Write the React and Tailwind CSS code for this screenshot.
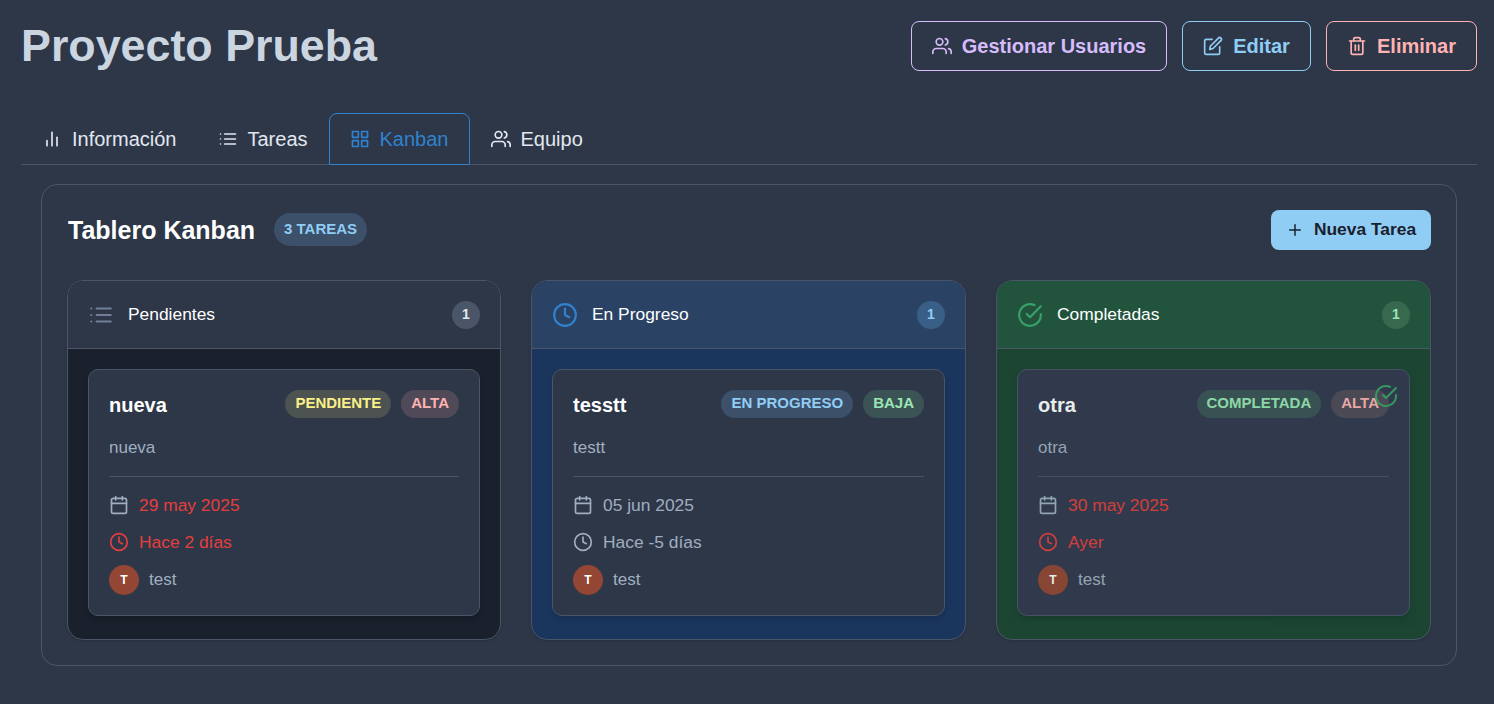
import React from 'react';
import { FiBarChart2, FiList, FiGrid, FiUsers, FiEdit, FiTrash2, FiPlus, FiClock, FiCalendar, FiCheckCircle } from 'react-icons/fi';

const TaskCard = ({ title, desc, statusLabel, statusClass, prioLabel, prioClass, date, ago, overdue, done }) => {
  const tone = overdue ? 'text-[#e53e3e]' : 'text-[#a0aec0]';
  return (
    <div className={`relative h-[247px] rounded-[10px] border border-[#4a5568] pl-5 pr-5 pt-5 shadow-md ${done ? 'opacity-90 bg-[#34394f]' : 'bg-[#2d3748]'}`}>
      {done && <FiCheckCircle className="absolute right-[11px] top-[14px] w-6 h-6 text-[#38a169]" />}
      <div className="flex items-center justify-between h-[28px]">
        <h3 className="text-[20px] font-bold text-white leading-[28px] pt-[2px]">{title}</h3>
        <div className="flex gap-[10px]">
          <span className={`h-[28px] px-[10px] rounded-full text-[15px] font-bold leading-[26px] ${statusClass}`}>{statusLabel}</span>
          <span className={`h-[28px] px-[10px] rounded-full text-[15px] font-bold leading-[26px] ${prioClass}`}>{prioLabel}</span>
        </div>
      </div>
      <p className="mt-[18px] text-[17px] leading-[24px] text-[#a0aec0]">{desc}</p>
      <div className="mt-[16px] border-t border-[#4a5568]" />
      <div className="mt-[16px] flex items-center gap-[10px] h-[24px]">
        <FiCalendar className="w-5 h-5 text-[#a0aec0] shrink-0" />
        <span className={`text-[17.4px] leading-[24px] ${tone}`}>{date}</span>
      </div>
      <div className="mt-[13px] flex items-center gap-[10px] h-[24px]">
        <FiClock className={`w-5 h-5 shrink-0 ${tone}`} />
        <span className={`text-[17.4px] leading-[24px] ${tone}`}>{ago}</span>
      </div>
      <div className="mt-[11px] flex items-center gap-[10px]">
        <div className="w-[30px] h-[30px] rounded-full bg-[#934634] flex items-center justify-center text-[12px] font-bold text-white">T</div>
        <span className="text-[17px] leading-[24px] text-[#a0aec0]">test</span>
      </div>
    </div>
  );
};

const Column = ({ icon, iconClass, name, headClass, bodyClass, countClass, children }) => (
  <div className={`rounded-2xl border border-[#4a5568] overflow-hidden shadow-sm ${bodyClass}`}>
    <div className={`h-[68px] flex items-center justify-between pl-5 pr-5 border-b border-[#4a5568] ${headClass}`}>
      <div className="flex items-center gap-[14px]">
        <span className={iconClass}>{icon}</span>
        <span className="text-[17.4px] leading-[24px] text-white pb-[2px]">{name}</span>
      </div>
      <span className={`w-[28px] h-[28px] rounded-full flex items-center justify-center text-[14px] font-bold ${countClass}`}>1</span>
    </div>
    <div className="px-5 pt-5 pb-[23px]">{children}</div>
  </div>
);

const tabs = [
  { label: 'Información', icon: <FiBarChart2 className="w-5 h-5" />, pad: 'pl-[20px] pr-[19px]' },
  { label: 'Tareas', icon: <FiList className="w-5 h-5" />, pad: 'px-[20px]' },
  { label: 'Kanban', icon: <FiGrid className="w-5 h-5" />, pad: 'px-[20px]', active: true },
  { label: 'Equipo', icon: <FiUsers className="w-5 h-5" />, pad: 'px-[20px]' },
];

export default function App() {
  return (
    <div className="min-h-screen bg-[#2d3748] pl-[21px] pr-[17px] pt-[21px] font-['Liberation_Sans',Arial,sans-serif]">
      {/* Header */}
      <header className="flex items-start justify-between h-[92px]">
        <h1 className="text-[44.8px] font-bold leading-[48px] text-[#cbd5e0]">Proyecto Prueba</h1>
        <div className="flex gap-[15px]">
          <button className="h-[50px] w-[256px] rounded-lg border border-[#d6bcfa] text-[#d6bcfa] text-[20px] font-bold flex items-center justify-center gap-[10px]">
            <FiUsers className="w-5 h-5" /> Gestionar Usuarios
          </button>
          <button className="h-[50px] w-[129px] rounded-lg border border-[#90cdf4] text-[#90cdf4] text-[20px] font-bold flex items-center justify-center gap-[10px]">
            <FiEdit className="w-5 h-5" /> Editar
          </button>
          <button className="h-[50px] w-[151px] rounded-lg border border-[#feb2b2] text-[#feb2b2] text-[20px] font-bold flex items-center justify-center gap-[10px]">
            <FiTrash2 className="w-5 h-5" /> Eliminar
          </button>
        </div>
      </header>

      {/* Tabs */}
      <nav className="flex border-b border-[#4a5568] h-[52px]">
        {tabs.map((t) => (
          <div
            key={t.label}
            className={`h-[52px] ${t.pad} flex items-center gap-[10px] text-[20px] rounded-t-lg border ${
              t.active ? 'border-[#3182ce] text-[#3182ce]' : 'border-transparent text-[#e2e8f0]'
            }`}
          >
            {t.icon}
            {t.label}
          </div>
        ))}
      </nav>

      {/* Board */}
      <section className="ml-[20px] mr-[20px] mt-[19px] h-[482px] rounded-2xl border border-[#4a5568] px-[25px] pt-[25px]">
        <div className="flex items-center justify-between h-[40px] mb-[30px]">
          <div className="flex items-center gap-[19px]">
            <h2 className="text-[25px] font-bold text-white pl-px pt-[2px]">Tablero Kanban</h2>
            <span className="h-[33px] mb-[2px] px-[10px] rounded-full bg-[#3c5069] text-[#90cdf4] text-[15px] font-bold leading-[31px]">3 TAREAS</span>
          </div>
          <button className="h-[40px] w-[160px] rounded-lg bg-[#90cdf4] text-[#1a202c] text-[17.4px] font-bold flex items-center justify-center gap-[10px]">
            <FiPlus className="w-[18px] h-[18px]" />
            <span className="pb-[2px]">Nueva Tarea</span>
          </button>
        </div>

        <div className="grid grid-cols-[434px_435px_435px] gap-[30px]">
          <Column
            icon={<FiList className="w-[26px] h-[26px]" />}
            iconClass="text-[#718096]"
            name="Pendientes"
            headClass="bg-[#2d3748]"
            bodyClass="bg-[#1a202c]"
            countClass="bg-[#4a5568] text-[#e2e8f0]"
          >
            <TaskCard
              title="nueva"
              desc="nueva"
              statusLabel="PENDIENTE"
              statusClass="bg-[#4c5350] text-[#faf089]"
              prioLabel="ALTA"
              prioClass="bg-[#504a58] text-[#feb2b2]"
              date="29 may 2025"
              ago="Hace 2 días"
              overdue
            />
          </Column>
          <Column
            icon={<FiClock className="w-[26px] h-[26px]" />}
            iconClass="text-[#3182ce]"
            name="En Progreso"
            headClass="bg-[#2a4365]"
            bodyClass="bg-[#1a365d]"
            countClass="bg-[#3a5f86] text-[#90cdf4]"
          >
            <TaskCard
              title="tesstt"
              desc="testt"
              statusLabel="EN PROGRESO"
              statusClass="bg-[#3c5069] text-[#90cdf4]"
              prioLabel="BAJA"
              prioClass="bg-[#3c5356] text-[#9ae6b4]"
              date="05 jun 2025"
              ago="Hace -5 días"
            />
          </Column>
          <Column
            icon={<FiCheckCircle className="w-[26px] h-[26px]" />}
            iconClass="text-[#38a169]"
            name="Completadas"
            headClass="bg-[#22543d]"
            bodyClass="bg-[#1c4532]"
            countClass="bg-[#38694f] text-[#9ae6b4]"
          >
            <TaskCard
              title="otra"
              desc="otra"
              statusLabel="COMPLETADA"
              statusClass="bg-[#3c5356] text-[#9ae6b4]"
              prioLabel="ALTA"
              prioClass="bg-[#504a58] text-[#feb2b2]"
              date="30 may 2025"
              ago="Ayer"
              overdue
              done
            />
          </Column>
        </div>
      </section>
    </div>
  );
}
